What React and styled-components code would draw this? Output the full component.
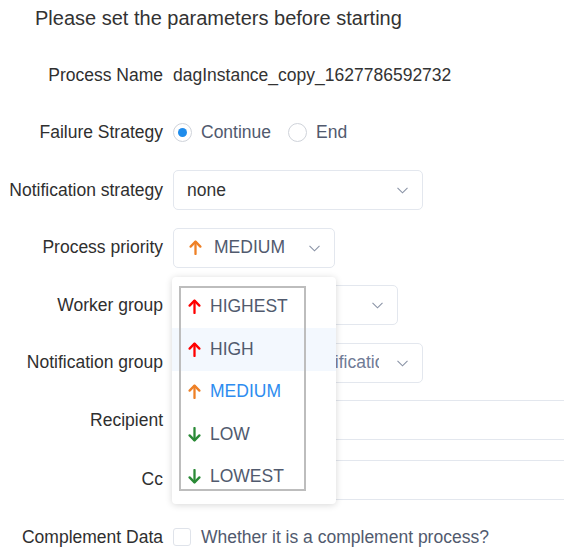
import React from 'react';
import styled, { createGlobalStyle } from 'styled-components';

const GlobalStyle = createGlobalStyle`
  html, body {
    margin: 0;
    padding: 0;
    background: #fff;
    overflow: hidden;
  }
  body {
    font-family: "Liberation Sans", Arial, sans-serif;
  }
`;

const Page = styled.div`
  width: 564px;
  height: 556px;
  overflow: hidden;
  display: flex;
  flex-direction: column;
  gap: 17.5px;
`;

const Title = styled.div`
  height: 36px;
  line-height: 36px;
  padding-left: 35px;
  font-size: 20px;
  color: #333;
  margin-bottom: 1.5px;
`;

const Row = styled.div`
  display: flex;
  align-items: center;
  height: 40px;
  flex-shrink: 0;
  margin-top: ${(p) => p.$shift || 0}px;
`;

const Label = styled.div`
  width: 163px;
  flex-shrink: 0;
  text-align: right;
  font-size: 17.5px;
  color: #2f2f2f;
  margin-right: 10px;
  white-space: nowrap;
`;

const Value = styled.div`
  font-size: 17.5px;
  color: #333;
`;

const RadioGroup = styled.div`
  display: flex;
  align-items: center;
`;

const RadioItem = styled.label`
  display: flex;
  align-items: center;
  gap: 9px;
  margin-right: 17px;
  font-size: 17.5px;
  color: #515a6e;
`;

const RadioCircle = styled.span`
  width: 17px;
  height: 17px;
  border: 1px solid #cfd3da;
  border-radius: 50%;
  display: flex;
  align-items: center;
  justify-content: center;
  background: #fff;
  &::after {
    content: '';
    width: 9px;
    height: 9px;
    border-radius: 50%;
    background: ${(p) => (p.$checked ? '#1f8ceb' : 'transparent')};
  }
`;

const SelectBox = styled.div`
  position: relative;
  box-sizing: border-box;
  width: ${(p) => p.$width}px;
  height: 40px;
  border: 1px solid #e3e7ee;
  border-radius: 5px;
  display: flex;
  align-items: center;
  padding: 0 43px 0 ${(p) => p.$pad || 13}px;
  background: #fff;
`;

const SelectText = styled.span`
  font-size: 17.5px;
  color: ${(p) => p.$color || '#333'};
  white-space: nowrap;
  overflow: hidden;
  display: flex;
  align-items: center;
  gap: 12px;
  flex: 1;
`;

const Chevron = styled.svg`
  position: absolute;
  right: 14px;
  top: 50%;
  margin-top: -3px;
`;

const TextInput = styled.div`
  box-sizing: border-box;
  width: 420px;
  height: 40px;
  border: 1px solid #e3e7ee;
  border-radius: 5px;
  background: #fff;
  flex-shrink: 0;
`;

const Anchor = styled.div`
  position: relative;
`;

const Dropdown = styled.div`
  position: absolute;
  top: 49px;
  left: -1px;
  width: 164px;
  box-sizing: border-box;
  padding: 9px 0 5.5px;
  background: #fff;
  box-shadow: 0 1px 7px rgba(0, 0, 0, 0.16);
  border-radius: 4px;
  z-index: 10;
`;

const FocusRing = styled.div`
  position: absolute;
  left: 7px;
  top: 9px;
  width: 127px;
  height: 205px;
  box-sizing: border-box;
  border: 2px solid #bdbdbd;
  pointer-events: none;
`;

const Option = styled.div`
  height: 42.5px;
  display: flex;
  align-items: center;
  gap: 9px;
  padding-left: 16px;
  font-size: 17.5px;
  color: ${(p) => (p.$selected ? '#2d8cf0' : '#515a6e')};
  background: ${(p) => (p.$hover ? '#f3f8fe' : '#fff')};
`;

const CheckRow = styled.label`
  display: flex;
  align-items: center;
  gap: 10px;
  font-size: 17.5px;
  color: #515a6e;
`;

const CheckBox = styled.span`
  width: 18px;
  height: 18px;
  box-sizing: border-box;
  border: 1px solid #dfe3ea;
  border-radius: 3px;
  background: #fff;
`;

const colors = {
  HIGHEST: '#ff0000',
  HIGH: '#ff0000',
  MEDIUM: '#ee8026',
  LOW: '#2a8a36',
  LOWEST: '#2a8a36',
};

const Arrow = ({ level }) => {
  const down = level === 'LOW' || level === 'LOWEST';
  return (
    <svg width="13" height="15" viewBox="0 0 13 15" style={{ flexShrink: 0 }}>
      <g
        stroke={colors[level]}
        strokeWidth="2.3"
        fill="none"
        strokeLinecap="round"
        strokeLinejoin="round"
        transform={down ? 'rotate(180 6.5 7.5)' : undefined}
      >
        <path d="M6.5 14 L6.5 1.8" />
        <path d="M1.6 6.6 L6.5 1.6 L11.4 6.6" />
      </g>
    </svg>
  );
};

const Caret = () => (
  <Chevron width="11" height="7" viewBox="0 0 11 7">
    <path d="M0.5 0.8 L5.5 5.8 L10.5 0.8" stroke="#8a93a6" strokeWidth="1.1" fill="none" />
  </Chevron>
);

const levels = ['HIGHEST', 'HIGH', 'MEDIUM', 'LOW', 'LOWEST'];

const App = () => (
  <Page>
    <GlobalStyle />
    <Title>Please set the parameters before starting</Title>

    <Row>
      <Label>Process Name</Label>
      <Value>dagInstance_copy_1627786592732</Value>
    </Row>

    <Row>
      <Label>Failure Strategy</Label>
      <RadioGroup>
        <RadioItem>
          <RadioCircle $checked />
          Continue
        </RadioItem>
        <RadioItem>
          <RadioCircle />
          End
        </RadioItem>
      </RadioGroup>
    </Row>

    <Row>
      <Label>Notification strategy</Label>
      <SelectBox $width={250}>
        <SelectText>none</SelectText>
        <Caret />
      </SelectBox>
    </Row>

    <Row>
      <Label>Process priority</Label>
      <Anchor>
        <SelectBox $width={162} $pad={15}>
          <SelectText $color="#515a6e">
            <Arrow level="MEDIUM" />
            MEDIUM
          </SelectText>
          <Caret />
        </SelectBox>
        <Dropdown>
          {levels.map((l) => (
            <Option key={l} $hover={l === 'HIGH'} $selected={l === 'MEDIUM'}>
              <Arrow level={l} />
              {l}
            </Option>
          ))}
          <FocusRing />
        </Dropdown>
      </Anchor>
    </Row>

    <Row>
      <Label>Worker group</Label>
      <SelectBox $width={225}>
        <Caret />
      </SelectBox>
    </Row>

    <Row>
      <Label>Notification group</Label>
      <SelectBox $width={250}>
        <SelectText $color="#6f7b96">Please select a notification group</SelectText>
        <Caret />
      </SelectBox>
    </Row>

    <Row>
      <Label>Recipient</Label>
      <TextInput />
    </Row>

    <Row $shift={2}>
      <Label>Cc</Label>
      <TextInput />
    </Row>

    <Row>
      <Label>Complement Data</Label>
      <CheckRow>
        <CheckBox />
        Whether it is a complement process?
      </CheckRow>
    </Row>
  </Page>
);

export default App;
